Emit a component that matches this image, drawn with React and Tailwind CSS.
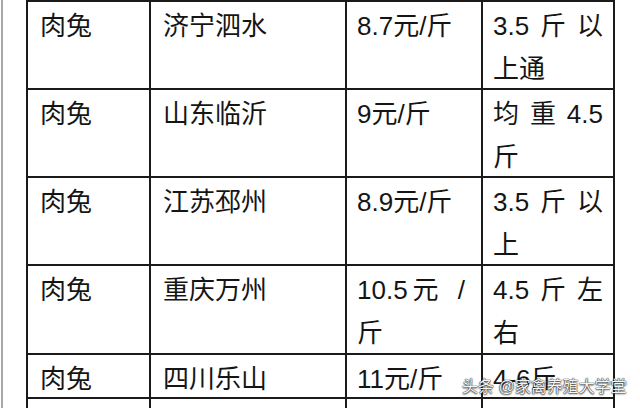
import React from 'react';

const rows = [
  { h: 'h-[88px]', breed: '肉兔', place: '济宁泗水', price: [['8.7元/斤']], weight: [['3.5', '斤', '以'], ['上通']] },
  { h: 'h-[88px]', breed: '肉兔', place: '山东临沂', price: [['9元/斤']], weight: [['均', '重', '4.5'], ['斤']] },
  { h: 'h-[88px]', breed: '肉兔', place: '江苏邳州', price: [['8.9元/斤']], weight: [['3.5', '斤', '以'], ['上']] },
  { h: 'h-[89px]', breed: '肉兔', place: '重庆万州', price: 'wide', weight: [['4.5', '斤', '左'], ['右']] },
  { h: 'h-[44px]', breed: '肉兔', place: '四川乐山', price: [['11元/斤']], weight: [['4-6斤']] },
  { h: 'h-[88px]', breed: '', place: '', price: [], weight: [] },
];

// one line of a justified cell: tokens spread over the full width
const Line = ({ parts }) =>
  parts.length > 1 ? (
    <div className="flex justify-between">
      {parts.map((p, i) => (
        <span key={i}>{p}</span>
      ))}
    </div>
  ) : (
    <div>{parts[0]}</div>
  );

const Cell = ({ className, children }) => (
  <div className={`border-r-2 border-b-2 border-[#1a1a1a] pt-[3px] ${className}`}>{children}</div>
);

export default function App() {
  return (
    <div
      className="w-[640px] h-[408px] overflow-hidden bg-white flex text-[#151515] text-[26px] leading-[43px] relative"
      style={{ fontFamily: '"Liberation Sans", "Noto Sans CJK SC", sans-serif' }}
    >
      <div className="ml-[1px] w-[2px] h-full bg-[#a8a8a8] shrink-0" />
      <div className="ml-[23px] shrink-0">
        <div className="grid grid-cols-[123px_196px_136px_132px] border-l-2 border-t-2 border-[#1a1a1a]">
          {rows.map((r, i) => (
            <React.Fragment key={i}>
              <Cell className={`${r.h} pl-3`}>{r.breed}</Cell>
              <Cell className={`${r.h} pl-3`}>{r.place}</Cell>
              <Cell className={`${r.h} pl-[10px] pr-[12px]`}>
                {r.price === 'wide' ? (
                  <>
                    <div>
                      <span>10.5</span>
                      <span className="ml-[5px]">元</span>
                      <span className="ml-[19px]">/</span>
                    </div>
                    <div>斤</div>
                  </>
                ) : (
                  r.price.map((l, j) => <Line key={j} parts={l} />)
                )}
              </Cell>
              <Cell className={`${r.h} pl-[10px] pr-[10px]`}>
                {r.weight.map((l, j) => (
                  <Line key={j} parts={l} />
                ))}
              </Cell>
            </React.Fragment>
          ))}
        </div>
      </div>
      <div className="absolute left-[462px] top-[377px] text-[16px] leading-[20px] text-[#f4f4f4] [text-shadow:0_0_1px_#222,0_0_1px_#222,0_1px_2px_#444] whitespace-nowrap">
        头条 @家禽养殖大学堂
      </div>
    </div>
  );
}
